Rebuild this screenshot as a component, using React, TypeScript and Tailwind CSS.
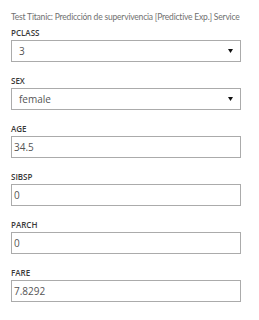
const fields = [
  { label: 'PCLASS', value: '3', select: true },
  { label: 'SEX', value: 'female', select: true },
  { label: 'AGE', value: '34.5' },
  { label: 'SIBSP', value: '0' },
  { label: 'PARCH', value: '0' },
  { label: 'FARE', value: '7.8292' },
];

function Arrow() {
  return (
    <svg width="5" height="4" viewBox="0 0 5 4" className="shrink-0">
      <path d="M0 0h5L2.5 4z" fill="#111" />
    </svg>
  );
}

export default function App() {
  return (
    <div
      className="w-[259px] h-[320px] bg-white pl-[11px] pt-[11px]"
      style={{ fontFamily: '"Open Sans", "Noto Sans", sans-serif' }}
    >
      <div
        className="text-[8.5px] leading-[12px] text-[#707070] whitespace-nowrap tracking-[-0.2px]"
        style={{ fontFamily: 'Lato, "Open Sans", sans-serif' }}
      >
        Test Titanic: Predicción de supervivencia [Predictive Exp.] Service
      </div>
      <div className="mt-[5px] flex flex-col">
        {fields.map((f) => (
          <div key={f.label} className="h-[48px]">
            <div className="text-[8px] leading-[10px] font-semibold text-[#3a3a3a]">
              {f.label}
            </div>
            {f.select ? (
              <div className="mt-[2px] w-[230px] h-[22px] border border-[#ababab] flex items-center justify-between pl-[7px] pr-[7px]">
                <span className="text-[10px] text-[#555]">{f.value}</span>
                <Arrow />
              </div>
            ) : (
              <div className="mt-[2px] w-[230px] h-[22px] border border-[#ababab] flex items-center pl-[2px]">
                <span className="text-[10px] text-[#555]">{f.value}</span>
              </div>
            )}
          </div>
        ))}
      </div>
    </div>
  );
}
